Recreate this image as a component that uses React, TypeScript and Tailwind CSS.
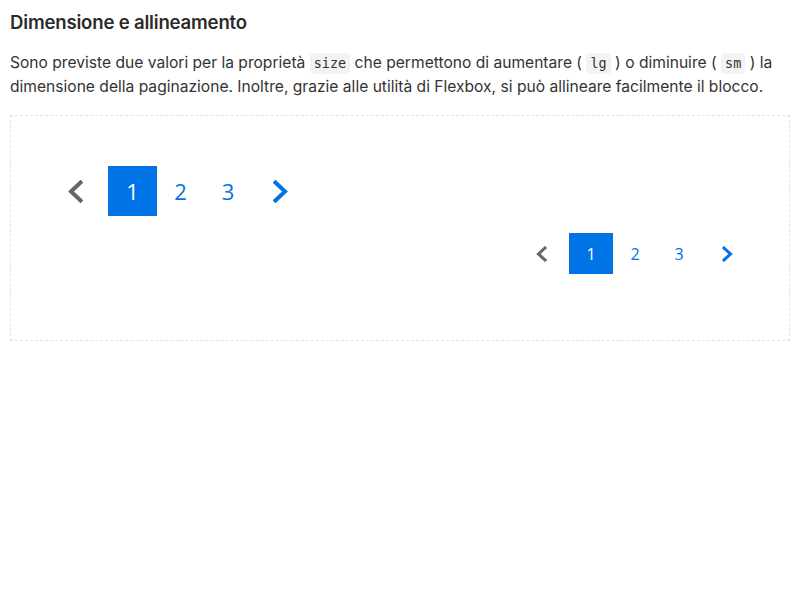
import React from "react";

function Chevron({ dir, w, h, sw, color }: { dir: "left" | "right"; w: number; h: number; sw: number; color: string }) {
  const pad = sw / 2 + 0.5;
  const pts =
    dir === "left"
      ? `${w - pad},${pad} ${pad + 0.5},${h / 2} ${w - pad},${h - pad}`
      : `${pad},${pad} ${w - pad - 0.5},${h / 2} ${pad},${h - pad}`;
  return (
    <svg width={w} height={h} viewBox={`0 0 ${w} ${h}`} fill="none">
      <polyline points={pts} stroke={color} strokeWidth={sw} strokeLinecap="square" strokeLinejoin="miter" />
    </svg>
  );
}

function Code({ children }: { children: React.ReactNode }) {
  return (
    <code className="inline-block rounded-[4px] bg-[#f3f3f3] px-[4px] align-baseline text-[13.5px] leading-[21px] text-[#333] [font-family:'DejaVu_Sans_Mono',monospace]">
      {children}
    </code>
  );
}

export default function App() {
  return (
    <div className="min-h-[600px] bg-white px-[10px] pt-[8px] text-[#333] [font-family:Inter,'Noto_Sans',sans-serif]">
      <h3 className="text-[18.6px] font-semibold leading-[28px] tracking-[-0.2px] text-[#2b2b2b]">Dimensione e allineamento</h3>
      <p className="mt-[15px] text-[15.6px] leading-[24px] text-[#333]">
        Sono previste due valori per la proprietà <Code>size</Code> che permettono di aumentare ( <Code>lg</Code> ) o diminuire ({" "}
        <Code>sm</Code> ) la dimensione della paginazione. Inoltre, grazie alle utilità di Flexbox, si può allineare facilmente il blocco.
      </p>
      <div className="mt-[16px] flex h-[226px] flex-col border border-dashed border-[#e3e3e3] px-[40px] pt-[50px] [font-family:'Open_Sans',sans-serif]">
        <nav className="flex items-center">
          <a className="mr-[9px] flex h-[50px] w-[48px] items-center justify-center">
            <Chevron dir="left" w={15} h={23} sw={4} color="#666666" />
          </a>
          <a className="flex h-[50px] w-[49px] items-center justify-center bg-[#0073e6] text-[22px] text-white">1</a>
          <a className="flex h-[50px] w-[47px] items-center justify-center text-[22px] text-[#0073e6]">2</a>
          <a className="flex h-[50px] w-[48px] items-center justify-center text-[22px] text-[#0073e6]">3</a>
          <a className="ml-[4px] flex h-[50px] w-[48px] items-center justify-center">
            <Chevron dir="right" w={15} h={23} sw={4} color="#0073e6" />
          </a>
        </nav>
        <nav className="mt-[17px] flex items-center justify-end">
          <a className="mr-[6px] flex h-[41px] w-[44px] items-center justify-center">
            <Chevron dir="left" w={11} h={16} sw={3} color="#666666" />
          </a>
          <a className="flex h-[41px] w-[44px] items-center justify-center bg-[#0073e6] text-[16px] text-white">1</a>
          <a className="flex h-[41px] w-[44px] items-center justify-center text-[16px] text-[#0073e6]">2</a>
          <a className="flex h-[41px] w-[44px] items-center justify-center text-[16px] text-[#0073e6]">3</a>
          <a className="ml-[4px] flex h-[41px] w-[44px] items-center justify-center">
            <Chevron dir="right" w={11} h={16} sw={3} color="#0073e6" />
          </a>
        </nav>
      </div>
    </div>
  );
}
